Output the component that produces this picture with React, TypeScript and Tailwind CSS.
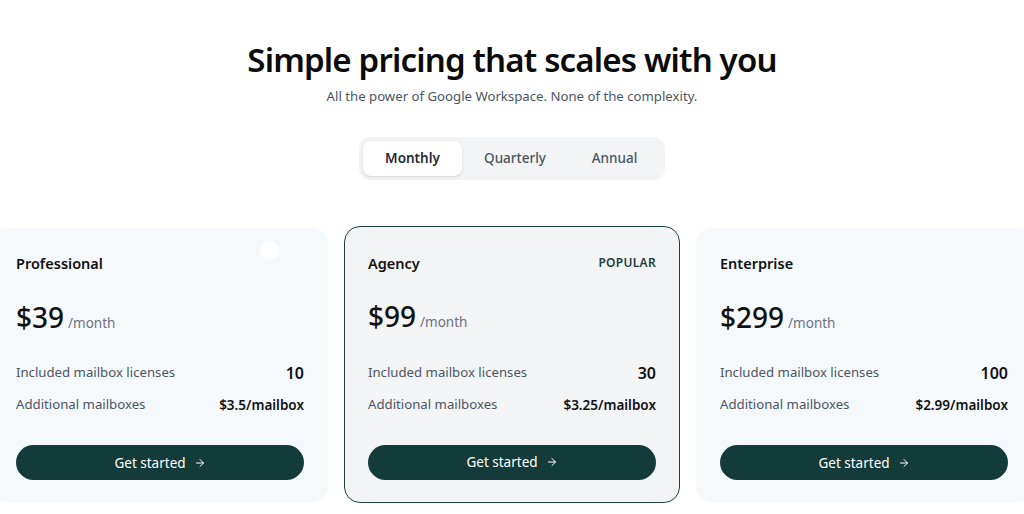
import { ArrowRight } from "lucide-react";

type Plan = {
  name: string;
  price: string;
  licenses: string;
  extra: string;
  popular?: boolean;
};

const plans: Plan[] = [
  { name: "Professional", price: "$39", licenses: "10", extra: "$3.5/mailbox" },
  { name: "Agency", price: "$99", licenses: "30", extra: "$3.25/mailbox", popular: true },
  { name: "Enterprise", price: "$299", licenses: "100", extra: "$2.99/mailbox" },
];

const PlanCard = ({ plan, first }: { plan: Plan; first?: boolean }) => (
  <div
    className={
      plan.popular
        ? "relative -my-[2px] flex flex-col rounded-2xl border-[1.5px] border-[#1d3f3e] bg-[#f3f4f6] px-[23px] pt-[25.5px] pb-[22.5px]"
        : "relative flex flex-col rounded-2xl bg-[#f5f9fc] px-[24px] pt-[25px] pb-[22px]"
    }
  >
    {first && <span className="absolute top-[13px] right-[49px] h-[19px] w-[19px] rounded-full bg-white" />}
    <div className="flex items-center justify-between">
      <h3 className="text-[14.5px] font-semibold text-[#111]">{plan.name}</h3>
      {plan.popular && (
        <span className="text-[12px] font-semibold tracking-wide text-[#1d3f3e]">POPULAR</span>
      )}
    </div>
    <div className="mt-[28px] flex items-baseline gap-1">
      <span className="text-[28px] font-medium leading-none text-[#111]">{plan.price}</span>
      <span className="text-[13.5px] text-[#6b7280]">/month</span>
    </div>
    <div className="mt-[28px] flex items-center justify-between">
      <span className="text-[13.2px] text-[#4b5563]">Included mailbox licenses</span>
      <span className="text-[16px] font-semibold text-[#111]">{plan.licenses}</span>
    </div>
    <div className="mt-[10px] flex items-center justify-between">
      <span className="text-[13.2px] text-[#4b5563]">Additional mailboxes</span>
      <span className="text-[13.5px] font-semibold text-[#111]">{plan.extra}</span>
    </div>
    <button className="mt-[30px] flex h-[35px] items-center justify-center gap-2 rounded-full bg-[#133b3a] text-[13.5px] text-white">
      Get started <ArrowRight className="h-3 w-3" strokeWidth={2} />
    </button>
  </div>
);

export default function App() {
  return (
    <div
      className="min-h-screen overflow-hidden bg-white pt-[39px]"
      style={{ fontFamily: '"Noto Sans", "Open Sans", sans-serif' }}
    >
      <div className="flex flex-col items-center">
        <h1 className="text-[33px] font-semibold leading-tight tracking-tight text-[#0b0b0b]">
          Simple pricing that scales with you
        </h1>
        <p className="mt-[7px] text-[13.2px] text-[#4b5563]">
          All the power of Google Workspace. None of the complexity.
        </p>
        <div className="mt-[30px] flex rounded-xl bg-[#f3f4f6] p-[4px]">
          <button className="h-[35px] w-[99px] rounded-lg bg-white text-[13.5px] font-semibold text-[#1f2937] shadow-sm">
            Monthly
          </button>
          <button className="h-[35px] w-[106px] text-[13.5px] font-medium text-[#4b5563]">Quarterly</button>
          <button className="h-[35px] w-[93px] text-[13.5px] font-medium text-[#4b5563]">Annual</button>
        </div>
      </div>
      <div className="mt-[48px] flex justify-center">
        <div className="grid w-[1040px] shrink-0 grid-cols-3 items-start gap-4">
          {plans.map((p, i) => (
            <PlanCard key={p.name} plan={p} first={i === 0} />
          ))}
        </div>
      </div>
    </div>
  );
}
